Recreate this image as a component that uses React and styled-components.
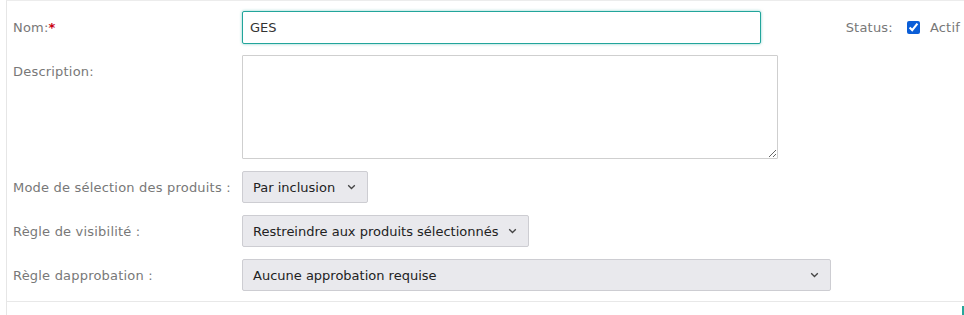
import styled, { createGlobalStyle } from "styled-components";

const GlobalStyle = createGlobalStyle`
  body {
    margin: 0;
    background: #fff;
    font-family: "DejaVu Sans", Verdana, sans-serif;
    font-size: 13px;
  }
`;

const Panel = styled.div`
  margin-left: 6px;
  border-left: 1px solid #e6e6e6;
  border-top: 1px solid #ececec;
  height: 314px;
  overflow: hidden;
`;

const Form = styled.div`
  padding: 10px 0 10px 6px;
`;

const Row = styled.div`
  display: flex;
  align-items: ${(p) => (p.$top ? "flex-start" : "center")};
  margin-top: ${(p) => p.$gap || 0}px;
`;

const Label = styled.label`
  width: 229px;
  flex-shrink: 0;
  color: #787878;
  font-size: 13px;
  letter-spacing: 0.2px;
  padding-top: ${(p) => (p.$top ? 9 : 0)}px;
`;

const Required = styled.span`
  color: #c9000f;
  font-weight: bold;
`;

const TextInput = styled.input`
  box-sizing: border-box;
  width: 519px;
  height: 33px;
  padding: 0 7px;
  border: 1px solid #22a59b;
  border-radius: 2px;
  box-shadow: 0 0 3px rgba(34, 165, 155, 0.55);
  font-family: "DejaVu Sans", Verdana, sans-serif;
  font-size: 13px;
  color: #333;
  outline: none;
`;

const TextArea = styled.textarea`
  box-sizing: border-box;
  width: 536px;
  height: 104px;
  border: 1px solid #cfcfcf;
  border-radius: 1px;
  font-family: "DejaVu Sans", Verdana, sans-serif;
  font-size: 13px;
  outline: none;
`;

const Status = styled.div`
  margin-left: auto;
  display: flex;
  align-items: center;
  color: #787878;
  font-size: 13px;
  letter-spacing: 0.2px;
  white-space: nowrap;
  margin-right: 4px;
`;

const Check = styled.input`
  width: 13px;
  height: 13px;
  margin: 0 10px 0 14px;
  accent-color: #0b5ed7;
`;

const SelectBox = styled.div`
  box-sizing: border-box;
  width: ${(p) => p.$w}px;
  height: 32px;
  display: flex;
  align-items: center;
  justify-content: space-between;
  padding: 0 11px 0 10px;
  background: #e9e9ed;
  border: 1px solid #cdcdd2;
  border-radius: 2px;
  color: #222;
  font-size: 13px;
`;

const Chevron = () => (
  <svg width="9" height="6" viewBox="0 0 9 6">
    <path d="M1.2 1.2l3.3 3.3 3.3-3.3" fill="none" stroke="#444" strokeWidth="1.3" />
  </svg>
);

const Divider = styled.div`
  border-top: 1px solid #e8e8e8;
`;

const Footer = styled.div`
  display: flex;
  justify-content: flex-end;
  padding-top: 4px;
`;

const TealEdge = styled.div`
  width: 2px;
  height: 12px;
  background: #26a69a;
`;

const selects = [
  { label: "Mode de sélection des produits :", value: "Par inclusion", w: 126 },
  { label: "Règle de visibilité :", value: "Restreindre aux produits sélectionnés", w: 287 },
  { label: "Règle dapprobation :", value: "Aucune approbation requise", w: 589 },
];

export default function App() {
  return (
    <>
      <GlobalStyle />
      <Panel>
        <Form>
          <Row>
            <Label>
              Nom:<Required>*</Required>
            </Label>
            <TextInput defaultValue="GES" />
            <Status>
              Status:
              <Check type="checkbox" defaultChecked />
              Actif
            </Status>
          </Row>
          <Row $top $gap={11}>
            <Label $top>Description:</Label>
            <TextArea />
          </Row>
          {selects.map((s) => (
            <Row key={s.label} $gap={12}>
              <Label>{s.label}</Label>
              <SelectBox $w={s.w}>
                <span>{s.value}</span>
                <Chevron />
              </SelectBox>
            </Row>
          ))}
        </Form>
        <Divider />
        <Footer>
          <TealEdge />
        </Footer>
      </Panel>
    </>
  );
}
